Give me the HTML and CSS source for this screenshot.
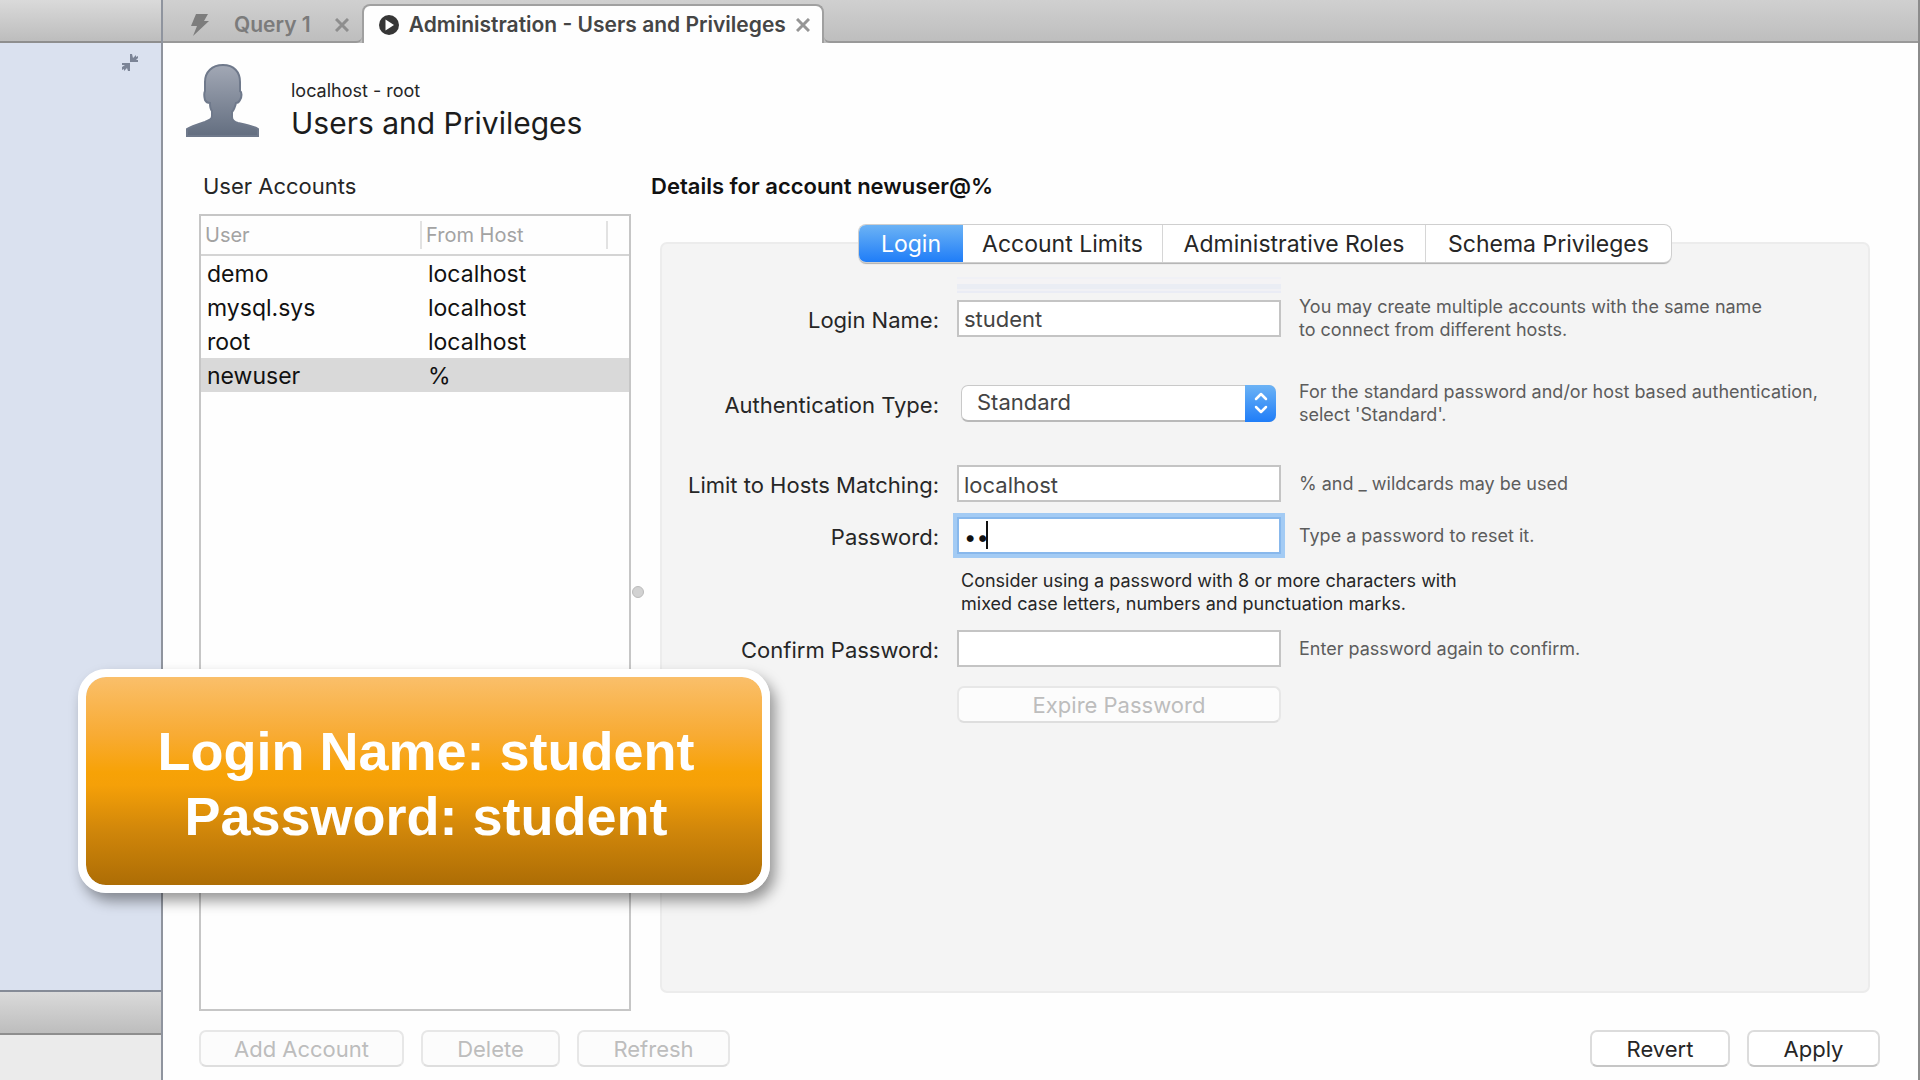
FILE: index.html
```html
<!DOCTYPE html>
<html lang="en">
<head>
<meta charset="utf-8">
<title>Administration - Users and Privileges</title>
<link rel="stylesheet" href="styles.css">
</head>
<body>
<div class="app">
  <aside class="sidebar">
    <div class="sidebar-bar"></div>
    <div class="sidebar-nav">
      <button class="collapse" type="button" aria-label="Collapse sidebar">
        <svg width="18" height="18" viewBox="0 0 18 18" aria-hidden="true">
          <path d="M9 0v8h8V6h-2l2-2V2l-2 1V1l-3 3-1-4z" fill="#7b8496"/>
          <path d="M9 17V9H1v2h3l-3 2v3l2-1v2l3-3 1 3z" fill="#7b8496"/>
        </svg>
      </button>
    </div>
    <div class="sidebar-bar sidebar-bar-lower"></div>
    <div class="sidebar-foot"></div>
  </aside>

  <div class="workspace">
    <nav class="doc-tabs">
      <div class="doc-tab">
        <svg width="20" height="22" viewBox="0 0 20 22" aria-hidden="true"><path d="M6 0h12l-4 7h5L3 22l4-10H1z" fill="#7d7d7d"/></svg>
        <a href="#query" class="doc-title">Query 1</a>
        <button class="close" type="button" aria-label="Close Query 1"><svg width="14" height="14" viewBox="0 0 14 14" aria-hidden="true"><path d="M1 1l12 12M13 1L1 13" stroke="#8e8e8e" stroke-width="3"/></svg></button>
      </div>
      <div class="doc-tab doc-tab-active">
        <svg width="20" height="20" viewBox="0 0 20 20" aria-hidden="true"><circle cx="10" cy="10" r="10" fill="#363636"/><path d="M6.500 4.500v11L15 10z" fill="#fff"/></svg>
        <a href="#admin" class="doc-title">Administration - Users and Privileges</a>
        <button class="close" type="button" aria-label="Close Administration"><svg width="14" height="14" viewBox="0 0 14 14" aria-hidden="true"><path d="M1 1l12 12M13 1L1 13" stroke="#959595" stroke-width="3"/></svg></button>
      </div>
      <div class="doc-rest"></div>
    </nav>

    <header class="page-head">
      <svg class="avatar" width="74" height="74" viewBox="0 0 74 74" aria-hidden="true">
        <defs><linearGradient id="person" x1="0" y1="0" x2="0" y2="1"><stop offset="0" stop-color="#a2a8b5"/><stop offset="1" stop-color="#636e80"/></linearGradient></defs>
        <path d="M38 1c11 0 17 7 17 17v9c2 1 2 6 0 9-1 2-3 3-4 3-1 4-2 7-4 9v5c0 3 2 5 6 6 10 2 17 4 20 6v7H2v-7c3-2 9-4 18-7 5-2 7-3 7-6v-5c-2-2-2-5-2-8-2 0-4-1-5-3-1-4-1-7 0-9v-9C20 8 27 1 38 1z" fill="url(#person)" stroke="#6f798b" stroke-width="2"/>
      </svg>
      <div>
        <p class="connection">localhost - root</p>
        <h1 class="page-title">Users and Privileges</h1>
      </div>
    </header>

    <main class="columns">
      <section class="accounts">
        <h2 class="section-title">User Accounts</h2>
        <div class="table-box">
          <table class="users">
            <colgroup><col class="col-user"><col class="col-host"><col></colgroup>
            <thead><tr><th scope="col"><span class="head-cell">User</span></th><th scope="col"><span class="head-cell">From Host</span></th><td></td></tr></thead>
            <tbody>
              <tr><td>demo</td><td>localhost</td><td></td></tr>
              <tr><td>mysql.sys</td><td>localhost</td><td></td></tr>
              <tr><td>root</td><td>localhost</td><td></td></tr>
              <tr class="selected"><td>newuser</td><td>%</td><td></td></tr>
            </tbody>
          </table>
        </div>
      </section>

      <div class="splitter"><span class="grip"></span></div>

      <section class="details">
        <h2 class="section-title details-title">Details for account newuser@%</h2>
        <div class="segments">
          <button class="segment segment-login segment-active" type="button">Login</button>
          <button class="segment segment-limits" type="button">Account Limits</button>
          <button class="segment segment-roles" type="button">Administrative Roles</button>
          <button class="segment segment-schema" type="button">Schema Privileges</button>
        </div>
        <form class="panel">
          <div class="row">
            <label for="login">Login Name:</label>
            <div class="control trail"><input id="login" class="field" type="text" value="student"></div>
            <p class="hint">You may create multiple accounts with the same name<br>to connect from different hosts.</p>
          </div>
          <div class="row row-spaced">
            <label for="auth">Authentication Type:</label>
            <div class="control select-wrap">
              <select id="auth" class="select"><option>Standard</option></select>
              <span class="stepper"><svg width="14" height="26" viewBox="0 0 14 26" aria-hidden="true"><path d="M2 9l5-5 5 5M2 17l5 5 5-5" fill="none" stroke="#fff" stroke-width="2.500" stroke-linecap="round" stroke-linejoin="round"/></svg></span>
            </div>
            <p class="hint">For the standard password and/or host based authentication,<br>select 'Standard'.</p>
          </div>
          <div class="row row-spaced">
            <label for="hosts">Limit to Hosts Matching:</label>
            <div class="control"><input id="hosts" class="field" type="text" value="localhost"></div>
            <p class="hint">% and _ wildcards may be used</p>
          </div>
          <div class="row row-close">
            <label for="password">Password:</label>
            <div class="control"><input id="password" class="field field-focus" type="password" value="st"><span class="caret"></span></div>
            <p class="hint">Type a password to reset it.</p>
          </div>
          <p class="advice row-close">Consider using a password with 8 or more characters with<br>mixed case letters, numbers and punctuation marks.</p>
          <div class="row row-close">
            <label for="confirm">Confirm Password:</label>
            <div class="control"><input id="confirm" class="field" type="password"></div>
            <p class="hint">Enter password again to confirm.</p>
          </div>
          <div class="row row-button">
            <button class="button button-expire" type="button" disabled>Expire Password</button>
          </div>
        </form>
      </section>
    </main>

    <footer class="actions">
      <button class="button button-add" type="button" disabled>Add Account</button>
      <button class="button button-delete" type="button" disabled>Delete</button>
      <button class="button button-refresh" type="button" disabled>Refresh</button>
      <button class="button button-revert" type="button">Revert</button>
      <button class="button button-apply" type="button">Apply</button>
    </footer>
  </div>

  <div class="callout">Login Name: student<br>Password: student</div>
</div>
</body>
</html>
```
FILE: styles.css
```css
* { box-sizing: border-box; }

body {
  margin: 0;
  font-family: Inter, Roboto, sans-serif;
  font-size: 22px;
  line-height: 28px;
  color: #262626;
  background: #fefefe;
}

p, h1, h2 { margin: 0; }
button, input, select { font: inherit; color: inherit; margin: 0; }

.app {
  position: relative;
  display: flex;
  min-height: 100vh;
  border-right: 2px solid #8c8c8c;
}

/* Sidebar */
.sidebar {
  display: flex;
  flex: none;
  flex-direction: column;
  width: 163px;
  border-right: 2px solid #8f949e;
}
.sidebar-bar {
  height: 43px;
  background: linear-gradient(#dadada, #bdbdbd);
  border-bottom: 2px solid #8e8e8e;
}
.sidebar-bar-lower {
  height: 45px;
  border-top: 2px solid #858b97;
}
.sidebar-nav {
  display: flex;
  flex: 1;
  align-items: flex-start;
  justify-content: flex-end;
  padding: 11px 22px;
  background: #dae1ef;
}
.sidebar-foot { height: 45px; background: #ebebeb; }
.collapse {
  display: flex;
  padding: 0;
  border: 0;
  background: none;
}

/* Document tabs */
.workspace {
  display: flex;
  flex: 1;
  flex-direction: column;
  min-width: 0;
}
.doc-tabs {
  display: flex;
  height: 43px;
  padding-top: 4px;
  background: linear-gradient(#d0d0d0, #bdbdbd);
}
.doc-tab {
  display: flex;
  align-items: center;
  gap: 24px;
  padding: 4px 13px 0 27px;
  border-bottom: 2px solid #999;
}
.doc-tab:first-child { border-bottom-right-radius: 6px; }
.doc-rest {
  flex: 1;
  border-bottom: 2px solid #999;
  border-bottom-left-radius: 6px;
}
.doc-tab-active {
  gap: 10px;
  padding: 0 12px 0 15px;
  background: #fefefe;
  border: 2px solid #a0a0a0;
  border-bottom: 0;
  border-radius: 8px 8px 0 0;
}
.doc-title {
  font-size: 21px;
  font-weight: 600;
  color: #7b7b7b;
  text-decoration: none;
  white-space: nowrap;
}
.doc-tab-active .doc-title { color: #454545; }
.close {
  display: flex;
  padding: 0;
  border: 0;
  background: none;
}

/* Page heading */
.page-head {
  display: flex;
  gap: 32px;
  padding: 21px 22px 0;
}
.connection { padding-top: 15px; font-size: 18px; line-height: 24px; }
.page-title {
  font-size: 30px;
  font-weight: 400;
  line-height: 40px;
  color: #1c1c1c;
}

/* Columns */
.columns {
  display: flex;
  flex: 1;
  padding: 29px 48px 0 36px;
}
.accounts {
  display: flex;
  flex: none;
  flex-direction: column;
  width: 432px;
}
.section-title {
  padding-left: 4px;
  font-size: 22px;
  font-weight: 400;
  line-height: 28px;
}
.details-title {
  padding: 0;
  margin-left: -9px;
  font-weight: 600;
  color: #111;
}
.table-box {
  flex: 1;
  margin-top: 14px;
  border: 2px solid #c6c6c6;
}
.users {
  width: 100%;
  table-layout: fixed;
  border-collapse: collapse;
  font-size: 23px;
  color: #111;
}
.col-user { width: 221px; }
.col-host { width: 186px; }
.users th, .users td { padding: 0; text-align: left; }
.users thead th, .users thead td {
  height: 39px;
  border-bottom: 2px solid #d4d4d4;
}
.users thead { font-size: 20px; color: #a3a3a3; }
.users th { font-weight: 400; }
.head-cell {
  display: block;
  padding-left: 4px;
  border-right: 2px solid #e2e2e2;
}
.users tbody td {
  height: 34px;
  padding: 2px 0 0 6px;
  line-height: 32px;
}
.selected { background: #d9d9d9; }

.splitter {
  display: flex;
  flex: none;
  width: 29px;
  align-items: center;
}
.grip {
  width: 12px;
  height: 12px;
  margin-left: 1px;
  border: 1px solid #bbb;
  border-radius: 50%;
  background: #d2d2d2;
}

.details {
  display: flex;
  flex: 1;
  flex-direction: column;
  min-width: 0;
}

/* Segmented control */
.segments {
  position: relative;
  display: flex;
  align-self: center;
  margin-top: 25px;
  border-radius: 7px;
  background: #fff;
  box-shadow: 0 0 0 1px #cfcfcf, 0 2px 1px #b0b0b0;
}
.segment {
  height: 37px;
  padding: 0;
  border: 0;
  border-right: 1px solid #d6d6d6;
  background: none;
  font-size: 23px;
}
.segment-login { width: 104px; }
.segment-limits { width: 200px; }
.segment-roles { width: 263px; }
.segment-schema { width: 245px; border-right: 0; }
.segment-active {
  border-right: 0;
  border-radius: 7px 0 0 7px;
  background: linear-gradient(#6cb3f5, #1f7df8);
  color: #fff;
}

/* Login form */
.panel {
  flex: 1;
  margin: -20px 0 18px;
  padding: 51px 0 24px;
  border: 2px solid #ececec;
  border-radius: 7px;
  background: #f4f4f4;
}
.row {
  display: grid;
  grid-template-columns: 277px 324px 1fr;
  column-gap: 18px;
  align-items: center;
}
.row label { padding-top: 3px; text-align: right; white-space: nowrap; }
.row-spaced { margin-top: 39px; }
.row-close { margin-top: 15px; }
.row-button { margin-top: 19px; }
.control { position: relative; }
.trail::before {
  content: "";
  position: absolute;
  left: 0;
  right: 0;
  bottom: 44px;
  height: 18px;
  background: linear-gradient(#f4f4f4 0 2px, #f0f1f6 2px 4px, #f4f3f5 4px 9px, #eaedf4 9px 14px, #f1f1f5 14px 16px, #eaecf5 16px);
}
.field {
  display: block;
  width: 100%;
  height: 37px;
  padding: 2px 5px 0;
  border: 2px solid #c4c4c4;
  border-radius: 0;
  background: #fff;
  color: #444;
  outline: 0;
}
.field-focus {
  border-color: #88b8ec;
  box-shadow: 0 0 0 4px #a3cbf4;
  color: #111;
}
.caret {
  position: absolute;
  left: 29px;
  top: 4px;
  width: 2px;
  height: 28px;
  background: #111;
}
.select-wrap { padding: 0 5px 0 4px; }
.select {
  display: block;
  width: 100%;
  height: 37px;
  padding: 0 40px 2px 15px;
  border: 1px solid #c9c9c9;
  border-bottom: 2px solid #b9b9b9;
  border-radius: 7px;
  background: #fff;
  color: #444;
  appearance: none;
}
.stepper {
  position: absolute;
  top: 0;
  right: 5px;
  display: flex;
  align-items: center;
  justify-content: center;
  width: 31px;
  height: 37px;
  border-radius: 0 7px 7px 0;
  background: linear-gradient(#6cb3f5, #1f7df8);
  pointer-events: none;
}
.hint, .advice { font-size: 18px; line-height: 23px; }
.hint { color: #5c5c5c; }
.advice { padding-left: 299px; }

/* Buttons */
.button {
  height: 37px;
  padding: 0;
  border: 2px solid #dcdcdc;
  border-bottom-color: #c6c6c6;
  border-radius: 7px;
  background: #fff;
}
.button:disabled {
  border-color: #e7e7e7;
  border-bottom-color: #dedede;
  background: #fcfcfc;
  color: #bdbdbd;
}
.button-expire { grid-column: 2; }
.actions {
  display: flex;
  gap: 17px;
  padding: 19px 38px 13px 36px;
}
.button-add { width: 205px; }
.button-delete { width: 139px; }
.button-refresh { width: 153px; }
.button-revert { width: 140px; margin-left: auto; }
.button-apply { width: 133px; }

/* Caption over the window */
.callout {
  position: absolute;
  left: 78px;
  top: 669px;
  width: 692px;
  padding: 42px 0 36px 4px;
  border: 8px solid #fff;
  border-radius: 28px;
  background: linear-gradient(#fabf6a, #f8ab33 28%, #f7a206 46%, #f5a008 52%, #d0860a 74%, #ad6d05) padding-box;
  box-shadow: 5px 8px 14px rgba(0, 0, 0, .4);
  color: #fff;
  font-family: "Liberation Sans", Arial, sans-serif;
  font-size: 54px;
  font-weight: 700;
  line-height: 65px;
  text-align: center;
}
```
